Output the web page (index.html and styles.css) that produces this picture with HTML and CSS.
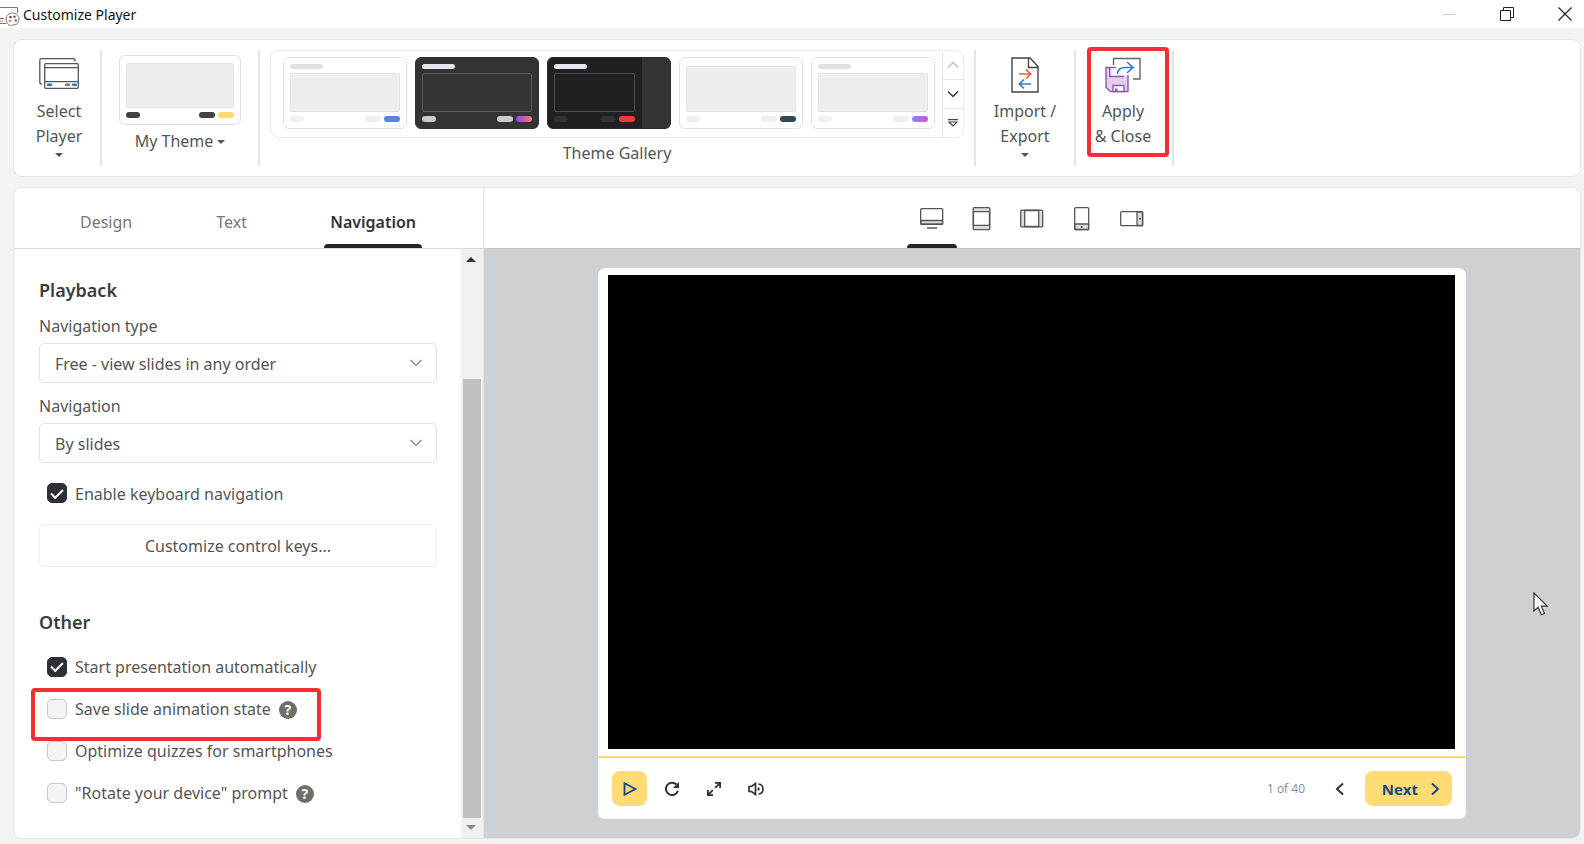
FILE: index.html
```html
<!DOCTYPE html>
<html lang="en">
<head>
<meta charset="utf-8">
<title>Customize Player</title>
<link rel="stylesheet" href="styles.css">
</head>
<body>
<div class="window">
  <header class="titlebar">
    <svg class="app-icon" width="20" height="22" viewBox="0 0 20 22" fill="none" stroke="#777" aria-hidden="true">
      <path d="M0 2.500H17.500V8"/><path d="M0 13.500H4M0 18.500H6"/><path d="M0 16H3" stroke="#999"/>
      <path d="M12.500 8C8.800 8 6 10.800 6 14S8.300 20 10.500 20.500C12 22 12.500 18.500 14 20C17 20 19 17 19 14C19 10.500 16 8 12.500 8Z" fill="#fff"/>
      <g stroke="none"><circle cx="10.500" cy="12" r="1.300" fill="#c22"/><circle cx="14.500" cy="11.700" r="1.300" fill="#2272c3"/><circle cx="9.800" cy="16" r="1.300" fill="#ef8033"/><circle cx="15.800" cy="15.500" r="1.200" fill="#8b4db8"/></g>
    </svg>
    <h1 class="window-title">Customize Player</h1>
    <div class="window-controls">
      <button class="window-button" aria-label="Minimize" disabled><svg width="14" height="14" viewBox="0 0 14 14" stroke="#ccc"><path d="M1 7.500H13"/></svg></button>
      <button class="window-button" aria-label="Restore"><svg width="14" height="14" viewBox="0 0 14 14" fill="none" stroke="#222"><path d="M.5 3.500H10.500V13.500H.5ZM3.500 3.500V.5H13.500V10.500H10.500"/></svg></button>
      <button class="window-button" aria-label="Close"><svg width="14" height="14" viewBox="0 0 14 14" stroke="#222" stroke-width="1.200"><path d="M.5 .5L13.500 13.500M13.500 .5L.5 13.500"/></svg></button>
    </div>
  </header>

  <section class="ribbon" aria-label="Ribbon">
    <div class="group group-select">
      <button class="ribbon-button">
        <svg width="40" height="34" viewBox="0 0 40 34" fill="none" stroke="#555" stroke-width="1.300" aria-hidden="true"><path d="M36 3.500V2.500Q36 .7 34.500 .7H2.500Q.8 .7 .8 2.500V24Q.8 26 3 26"/><rect x="5.700" y="5.700" width="33.600" height="24.600" rx="1"/><path d="M6 9.700H39M6 23.700H39"/><g stroke="none"><rect x="8" y="25.500" width="5" height="2.500" rx="1" fill="#1b78d0"/><rect x="26" y="25.500" width="5" height="2.500" rx="1" fill="#777"/><rect x="33" y="25.500" width="5" height="2.500" rx="1" fill="#1b78d0"/></g></svg>
        <span class="ribbon-label">Select<br>Player</span>
        <span class="caret"></span>
      </button>
    </div>
    <div class="group group-theme">
      <button class="ribbon-button theme-button">
        <span class="thumb thumb-mine"><span class="stage"></span><span class="pills"><i></i><i></i><i></i></span></span>
        <span class="theme-name">My Theme <span class="caret"></span></span>
      </button>
    </div>
    <div class="group group-gallery">
      <div class="gallery">
        <div class="gallery-items">
          <button class="thumb thumb-blue" aria-label="Light theme"><span class="heading"></span><span class="stage"></span><span class="pills"><i></i><i></i><i></i></span></button>
          <button class="thumb thumb-dark" aria-label="Dark theme"><span class="heading"></span><span class="stage"></span><span class="pills"><i></i><i></i><i></i></span></button>
          <button class="thumb thumb-side" aria-label="Dark theme with sidebar"><span class="heading"></span><span class="stage"></span><span class="pills"><i></i><i></i><i></i></span></button>
          <button class="thumb thumb-navy" aria-label="Navy theme"><span class="stage"></span><span class="pills"><i></i><i></i><i></i></span></button>
          <button class="thumb thumb-violet" aria-label="Violet theme"><span class="heading"></span><span class="stage"></span><span class="pills"><i></i><i></i><i></i></span></button>
        </div>
        <div class="gallery-scroll">
          <button aria-label="Previous row" disabled><svg width="12" height="8" viewBox="0 0 12 8" fill="none" stroke="#bbb" stroke-width="1.300"><path d="M1 6.500L6 1.500L11 6.500"/></svg></button>
          <button aria-label="Next row"><svg width="12" height="8" viewBox="0 0 12 8" fill="none" stroke="#333" stroke-width="1.400"><path d="M1 1.500L6 6.500L11 1.500"/></svg></button>
          <button aria-label="Show all themes"><svg width="12" height="8" viewBox="0 0 12 8" fill="none" stroke="#444" stroke-width="1.200"><path d="M1 .7H11M2 3H10L6 7Z"/></svg></button>
        </div>
      </div>
      <span class="gallery-label">Theme Gallery</span>
    </div>
    <div class="group group-import">
      <button class="ribbon-button">
        <svg width="28" height="36" viewBox="0 0 28 36" fill="none" stroke="#444" stroke-width="1.400" aria-hidden="true"><path d="M1 1H19L27 9.500V35H1ZM17.500 1V10.500H27"/><path d="M8 17H20M15 12.500L19.800 17L15 21.500" stroke="#d8642c" stroke-width="1.600"/><path d="M20 27H8M13 22.500L8.200 27L13 31.500" stroke="#2b7dc6" stroke-width="1.600"/></svg>
        <span class="ribbon-label">Import /<br>Export</span>
        <span class="caret"></span>
      </button>
    </div>
    <div class="group group-apply">
      <button class="ribbon-button highlight">
        <svg width="36" height="36" viewBox="0 0 36 36" fill="none" stroke-width="1.400" aria-hidden="true"><path d="M8.500 8V1.500H35V22H28" stroke="#666"/><path d="M11 10.500H1V30.500L5.500 34.500H23V18.500H12" fill="#e0d0ec" stroke="none"/><path d="M5.500 11H11L12.500 19H5.500Z" fill="#fff"/><path d="M11 10.500H1V30.500L5.500 34.500H23V18" stroke="#8f57b2"/><path d="M4.800 11V19.500H19" stroke="#8f57b2"/><path d="M8 34.500V28.500H19V34.500Z" fill="#fff" stroke="#8f57b2"/><rect x="10" y="31.500" width="2.500" height="3" fill="#8f57b2"/><path d="M12.500 17C12.500 12.500 16 10.500 20.500 10.500H27.500M22 5L28 10.500L22 16" stroke="#2b7dc6" stroke-width="1.600"/></svg>
        <span class="ribbon-label">Apply<br>&amp; Close</span>
      </button>
    </div>
  </section>

  <main class="workspace">
    <aside class="sidebar">
      <nav class="tabs" role="tablist">
        <button class="tab tab-design" role="tab">Design</button>
        <button class="tab tab-text" role="tab">Text</button>
        <button class="tab tab-current" role="tab" aria-selected="true">Navigation</button>
      </nav>
      <div class="sidebar-body">
        <form class="settings">
          <h2 class="section-title">Playback</h2>
          <label class="field-label" for="nav-type">Navigation type</label>
          <div class="select-box">
            <select id="nav-type"><option>Free - view slides in any order</option></select>
            <svg class="select-arrow" width="12" height="8" viewBox="0 0 12 8" fill="none" stroke="#888" stroke-width="1.200"><path d="M.5 1L6 6.500L11.500 1"/></svg>
          </div>
          <label class="field-label" for="nav-by">Navigation</label>
          <div class="select-box">
            <select id="nav-by"><option>By slides</option></select>
            <svg class="select-arrow" width="12" height="8" viewBox="0 0 12 8" fill="none" stroke="#888" stroke-width="1.200"><path d="M.5 1L6 6.500L11.500 1"/></svg>
          </div>
          <div class="check-row check-keyboard">
            <input type="checkbox" id="keyboard" checked><label for="keyboard">Enable keyboard navigation</label>
          </div>
          <button type="button" class="keys-button">Customize control keys...</button>
          <h2 class="section-title section-other">Other</h2>
          <div class="check-list">
            <div class="check-row"><input type="checkbox" id="auto" checked><label for="auto">Start presentation automatically</label></div>
            <div class="check-row check-marked"><input type="checkbox" id="save"><label for="save">Save slide animation state</label><button type="button" class="help" aria-label="Help">?</button></div>
            <div class="check-row"><input type="checkbox" id="quiz"><label for="quiz">Optimize quizzes for smartphones</label></div>
            <div class="check-row"><input type="checkbox" id="rotate"><label for="rotate">"Rotate your device" prompt</label><button type="button" class="help" aria-label="Help">?</button></div>
          </div>
        </form>
        <div class="scrollbar" aria-hidden="true">
          <span class="scroll-arrow scroll-up"></span>
          <span class="scroll-track"><span class="scroll-thumb"></span></span>
          <span class="scroll-arrow scroll-down"></span>
        </div>
      </div>
    </aside>

    <section class="preview">
      <div class="devices">
        <button class="device device-current" aria-label="Desktop"><svg width="24" height="24" viewBox="0 0 24 24" fill="none" stroke="#555" stroke-width="1.300"><rect x=".7" y="1.700" width="22" height="15.600" rx="1"/><path d="M1 13.500H22.500V17H1Z" fill="#ddd"/><path d="M7 21H17"/></svg></button>
        <button class="device" aria-label="Tablet portrait"><svg width="24" height="24" viewBox="0 0 24 24" fill="none" stroke="#555" stroke-width="1.300"><rect x="3.200" y=".7" width="16.600" height="22" rx="1" fill="#ddd"/><path d="M3.500 4.700H19.500V18.300H3.500Z" fill="#fff"/></svg></button>
        <button class="device" aria-label="Tablet landscape"><svg width="24" height="24" viewBox="0 0 24 24" fill="none" stroke="#555" stroke-width="1.300"><rect x=".7" y="3.200" width="22" height="16.600" rx="1" fill="#ddd"/><path d="M4.700 3.500V19.500H18.700V3.500Z" fill="#fff"/></svg></button>
        <button class="device" aria-label="Phone portrait"><svg width="24" height="24" viewBox="0 0 24 24" fill="none" stroke="#555" stroke-width="1.300"><rect x="4.700" y=".7" width="14" height="22" rx="1"/><path d="M5 17H18.500V22.500H5Z" fill="#ddd"/><circle cx="11.700" cy="20" r="1" fill="#444" stroke="none"/></svg></button>
        <button class="device" aria-label="Phone landscape"><svg width="24" height="24" viewBox="0 0 24 24" fill="none" stroke="#555" stroke-width="1.300"><rect x=".7" y="4.700" width="22" height="14" rx="1"/><path d="M17 5V18.500H22.500V5Z" fill="#ddd"/><circle cx="20" cy="11.700" r="1" fill="#444" stroke="none"/></svg></button>
      </div>
      <div class="canvas">
        <div class="player">
          <div class="slide"></div>
          <div class="player-bar">
            <button class="play" aria-label="Play"><svg width="16" height="16" viewBox="0 0 16 16" fill="none" stroke="#1c4583" stroke-width="1.800"><path d="M2.500 2.200L13.500 8L2.500 13.800Z"/></svg></button>
            <button class="tool" aria-label="Replay"><svg width="16" height="16" viewBox="0 0 16 16" fill="none" stroke="#333" stroke-width="2"><path d="M12.500 3.500A6.200 6.200 0 1 0 14 9.800"/><path d="M15 1V7H9Z" fill="#333" stroke="none"/></svg></button>
            <button class="tool" aria-label="Full screen"><svg width="16" height="16" viewBox="0 0 16 16" fill="none" stroke="#333" stroke-width="1.800"><path d="M9 1.900H14.100V7M14 2L9.200 6.800M1.900 9V14.100H7M2 14L6.800 9.200"/></svg></button>
            <button class="tool" aria-label="Volume"><svg width="16" height="16" viewBox="0 0 16 16" fill="none" stroke="#333" stroke-width="1.700"><path d="M1 5.500H3.500L7.500 2.500V13.500L3.500 10.500H1Z"/><path d="M10.500 3C16.500 3.500 16.500 12.500 10.500 13"/><path d="M10.500 6.500V9.500" stroke-width="2"/></svg></button>
            <span class="counter">1 of 40</span>
            <button class="tool previous" aria-label="Previous"><svg width="10" height="14" viewBox="0 0 10 14" fill="none" stroke="#333" stroke-width="2"><path d="M8 1.500L2 7L8 12.500"/></svg></button>
            <button class="next">Next <svg width="10" height="14" viewBox="0 0 10 14" fill="none" stroke="#1c4583" stroke-width="2"><path d="M2 1.500L8 7L2 12.500"/></svg></button>
          </div>
        </div>
      </div>
    </section>
  </main>
  <svg class="cursor" width="16" height="25" viewBox="0 0 16 25" aria-hidden="true"><path d="M1 1V19L5.200 15.200L8.300 22.800L11.500 21.500L8.300 14.200H14.200Z" fill="#fff" stroke="#333" stroke-width="1.200"/></svg>
</div>
</body>
</html>
```
FILE: styles.css
```css
*, *::before, *::after { box-sizing: border-box; }
body { margin: 0; background: #f3f3f3; color: #555; font: 16px/25px "Noto Sans", "Open Sans", sans-serif; }
button, select { font: inherit; color: inherit; background: none; border: 0; padding: 0; margin: 0; }
svg { display: block; flex: none; }
h1, h2 { margin: 0; }

.window { min-height: 100vh; display: flex; flex-direction: column; position: relative; }
.titlebar { height: 28px; background: #fff; display: flex; align-items: center; }
.app-icon { margin-top: 4px; margin-right: 3px; }
.window-title { font-size: 14px; line-height: 20px; font-weight: 400; color: #111; padding-top: 1px; }
.window-controls { margin-left: auto; display: flex; }
.window-button { width: 58px; height: 26px; display: flex; align-items: center; justify-content: center; }
.window-button:last-child { margin-right: -10px; }

.ribbon { margin: 11px 3px 0 13px; min-height: 137px; background: #fff; border: 1px solid #e8e8e8; border-radius: 9px; display: flex; padding: 10px 0; }
.group { border-right: 2px solid #e6e6e6; display: flex; flex-direction: column; align-items: center; }
.group-select { width: 88px; padding-left: 4px; }
.group-theme { width: 158px; }
.group-gallery { width: 716px; }
.group-import { width: 100px; }
.group-apply { width: 98px; align-items: flex-start; padding-left: 11px; }
.ribbon-button { display: flex; flex-direction: column; align-items: center; padding-top: 7px; }
.ribbon-label { margin-top: 6px; }
.caret { border: 4px solid transparent; border-top-color: #555; border-bottom: 0; margin-top: 4px; }
.ribbon-button > svg { height: 36px; }
.highlight { border: 4px solid #f23032; border-radius: 4px; width: 82px; height: 110px; margin-top: -3px; padding: 6px 10px 0 0; }
.theme-button { padding-top: 5px; }
.theme-name { display: flex; align-items: center; gap: 4px; margin-top: 4px; }
.theme-name .caret { margin: 0; }

.thumb { width: 124px; height: 72px; border: 1px solid #e1e1e1; border-radius: 6px; padding: 6px; display: flex; flex-direction: column; gap: 4px; background: #fff; }
.thumb .heading { width: 33px; height: 5px; border-radius: 3px; background: #dfdfe8; flex: none; }
.thumb .stage { flex: 1; align-self: stretch; border: 1px solid #e3e3e3; border-radius: 2px; background: #eee; }
.thumb .pills { display: flex; align-self: stretch; gap: 3px; }
.thumb i { width: 16px; height: 6px; border-radius: 3px; background: #eff0f3; }
.thumb i:first-child { width: 14px; margin-right: auto; }
.thumb-mine { width: 122px; height: 70px; padding-top: 7px; }
.thumb-mine i { background: #404343; }
.thumb-mine i:last-child { background: #ffd86f; }
.thumb-blue i:last-child { background: #5986d8; }
.thumb-dark { background: #333; border-color: #333; }
.thumb-dark .heading, .thumb-side .heading { background: #e8e5f0; }
.thumb-dark .stage { background: #353535; border-color: #5a5a5a; }
.thumb-dark i { background: #ccc; }
.thumb-dark i:last-child { background: linear-gradient(90deg, #8f48ef, #fa7668); }
.thumb-side { background: linear-gradient(90deg, #202024 77%, #333 77%); border-color: #2a2a2d; padding-right: 35px; }
.thumb-side .stage { background: #202024; border-color: #4c4c50; }
.thumb-side i { background: #303035; }
.thumb-side i:last-child { background: #ed3939; }
.thumb-navy { padding-top: 8px; }
.thumb-navy i:last-child { background: #30475c; }
.thumb-violet i:last-child { background: linear-gradient(90deg, #8a85ff, #cc55cf); }

.gallery { width: 694px; height: 88px; flex: none; border: 1px solid #eaeaea; border-radius: 8px; display: flex; }
.gallery-items { flex: 1; display: flex; gap: 8px; padding: 6px 0 0 12px; }
.gallery-scroll { width: 21px; border-left: 1px solid #e6e6e6; display: flex; flex-direction: column; }
.gallery-scroll button { flex: 1; display: flex; align-items: center; justify-content: center; }
.gallery-scroll button + button { border-top: 1px solid #e6e6e6; }
.gallery-label { margin-top: 3px; }

.workspace { flex: 1; margin: 10px 3px 5px 13px; border: 1px solid #e6e6e6; border-radius: 9px; background: #fff; display: flex; overflow: hidden; }
.sidebar { width: 470px; border-right: 1px solid #e3e3e3; display: flex; flex-direction: column; }
.tabs { height: 61px; border-bottom: 1px solid #dcdcdc; display: flex; padding-left: 60px; }
.tab { color: #777; border-bottom: 4px solid transparent; padding: 12px 6px 0; }
.tab-text { margin-left: 72px; }
.tab-current { margin-left: auto; margin-right: 61px; color: #303336; font-weight: 600; position: relative; }
.tab-current::after, .device-current::after { content: ""; position: absolute; left: 0; right: 0; bottom: -4px; height: 4px; background: #222427; border-radius: 4px 4px 0 0; }
.sidebar-body { flex: 1; display: flex; }
.settings { flex: 1; padding: 28px 24px 0 25px; }
.section-title { font-size: 18px; line-height: 26px; font-weight: 600; color: #3a3d40; }
.field-label { display: block; margin-top: 11px; line-height: 24px; margin-bottom: 5px; }
.select-box { display: grid; align-items: center; }
.select-box > * { grid-area: 1 / 1; }
.select-box select { appearance: none; width: 100%; height: 40px; border: 1px solid #e2e2e2; border-radius: 5px; padding: 2px 15px 0; }
.select-arrow { justify-self: end; margin-right: 15px; pointer-events: none; }
.check-row { display: flex; align-items: center; height: 26px; gap: 8px; padding-left: 8px; position: relative; }
.check-keyboard { margin: 17px 0 18px; }
.check-row label { padding-top: 2px; }
.check-row input { appearance: none; width: 20px; height: 20px; margin: 0; border: 1px solid #c8c8c8; border-radius: 5px; background: #f4f4f4; display: grid; place-items: center; }
.check-row input:checked { background: #2d3135; border-color: #2d3135; }
.check-row input:checked::before { content: ""; width: 12px; height: 7px; border: solid #fff; border-width: 0 0 2px 2px; transform: translateY(-1px) rotate(-45deg); }
.keys-button { width: 100%; height: 43px; border: 1px solid #eee; border-radius: 5px; padding-top: 1px; }
.section-other { margin-top: 42px; }
.check-list { display: grid; gap: 17px; margin-top: 19px; }
.check-list .check-row { height: 25px; }
.help { width: 18px; height: 18px; border-radius: 50%; background: #6e6e6b; color: #fff; font-size: 14px; line-height: 18px; font-weight: 700; margin-top: 3px; }
.check-marked::before { content: ""; position: absolute; left: -8px; top: -8px; width: 290px; height: 53px; border: 4px solid #f23032; border-radius: 4px; pointer-events: none; }

.scrollbar { width: 22px; background: #f0f0f0; display: flex; flex-direction: column; align-items: flex-start; padding: 8px 2px; }
.scroll-arrow { border: 5px solid transparent; margin-left: 3px; }
.scroll-up { border-bottom-color: #333; border-top: 0; }
.scroll-down { border-top-color: #888; border-bottom: 0; }
.scroll-track { flex: 1; width: 18px; display: flex; flex-direction: column; justify-content: flex-end; margin: 7px 0; }
.scroll-thumb { height: 80%; background: #c1c1c1; }

.preview { flex: 1; display: flex; flex-direction: column; }
.devices { height: 60px; display: flex; justify-content: center; }
.device { width: 50px; display: flex; justify-content: center; padding-top: 19px; align-items: flex-start; position: relative; }
.device-current::after { bottom: 0; }
.canvas { flex: 1; background: #cdd1d4; border-top: 1px solid #c5c9cc; padding: 19px 114px; display: flex; }
.player { flex: 1; background: #fff; border-radius: 7px; display: flex; flex-direction: column; }
.slide { flex: 1; background: #000; margin: 7px 11px 7px 10px; }
.player-bar { border-top: 2px solid #ffd978; height: 63px; display: flex; align-items: center; padding: 0 14px; }
.play { width: 35px; height: 35px; border-radius: 8px; background: #ffdb74; display: grid; place-items: center; margin-right: 4px; }
.tool { width: 42px; height: 35px; display: grid; place-items: center; }
.counter { margin-left: auto; font-size: 12px; color: #888; font-family: "Open Sans", sans-serif; }
.previous { margin: 0 4px 0 14px; }
.next { width: 87px; height: 35px; border-radius: 8px; background: #ffdb74; color: #1c4583; font: 700 15px/20px "Open Sans", sans-serif; display: flex; align-items: center; justify-content: flex-end; padding-right: 12px; gap: 12px; }
.cursor { position: absolute; right: 35px; top: 592px; }
```
